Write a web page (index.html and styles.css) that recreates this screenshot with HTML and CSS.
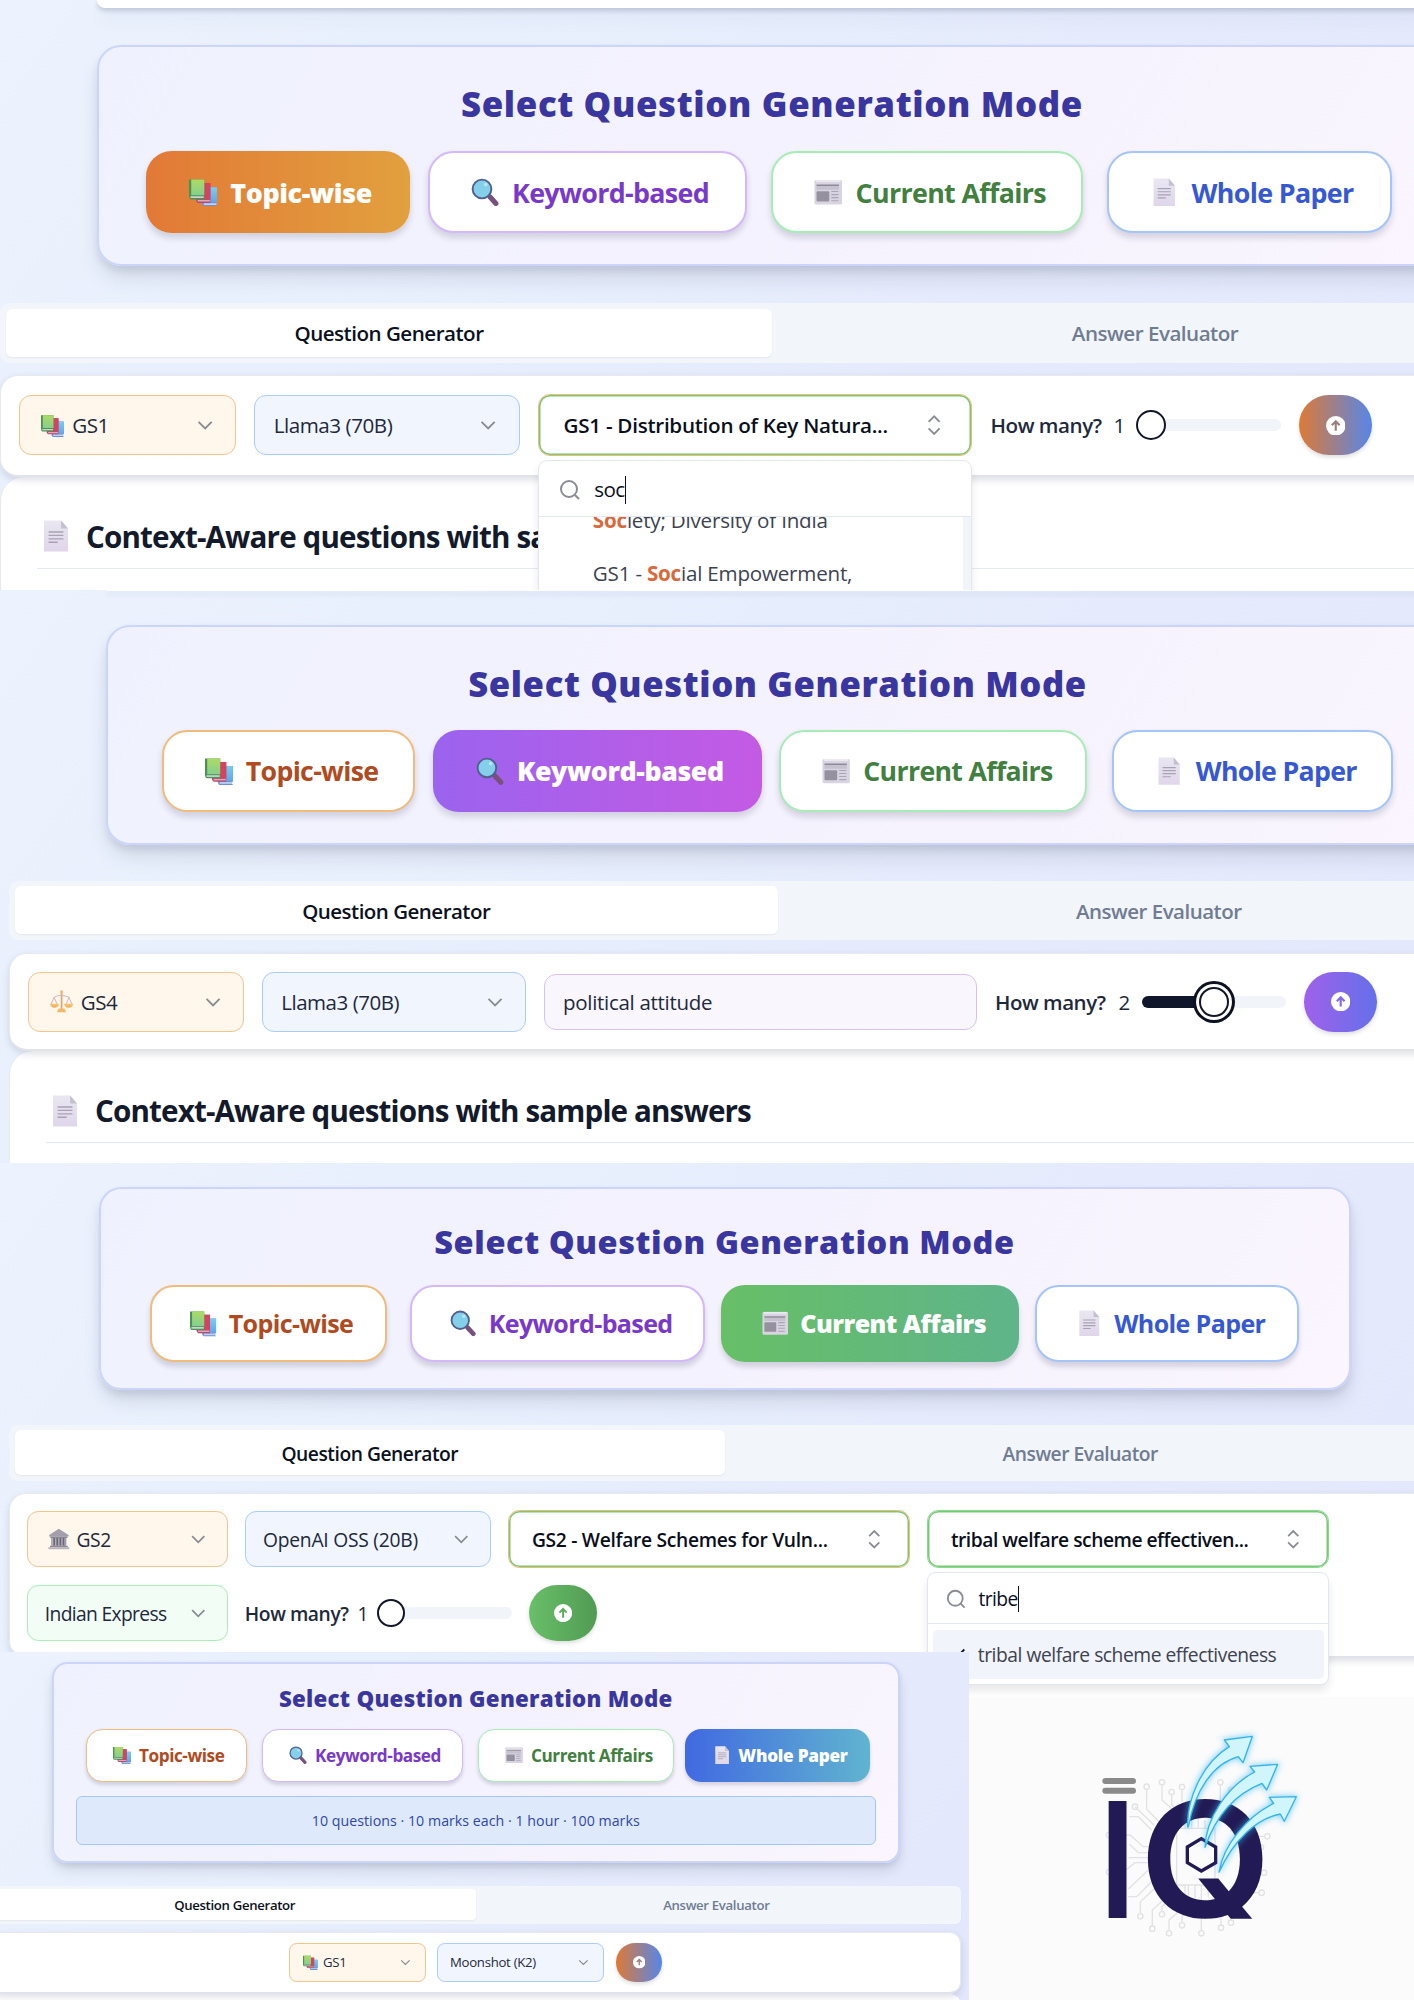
FILE: index.html
```html
<!DOCTYPE html>
<html lang="en">
<head>
<meta charset="utf-8">
<title>Question Generation Modes</title>
<link rel="stylesheet" href="styles.css">
</head>
<body>
<svg class="defs" aria-hidden="true">
  <defs>
    <linearGradient id="gGreen" x1="0" y1="0" x2="0" y2="1"><stop offset="0" stop-color="#acdb64"/><stop offset="1" stop-color="#86cf8e"/></linearGradient>
    <linearGradient id="gBlue" x1="0" y1="0" x2="0" y2="1"><stop offset="0" stop-color="#78cdf0"/><stop offset="1" stop-color="#62a6ea"/></linearGradient>
    <linearGradient id="gDoc" x1="0" y1="0" x2="0" y2="1"><stop offset="0" stop-color="#e9e6f1"/><stop offset="1" stop-color="#e0d6ea"/></linearGradient>
    <linearGradient id="gPan" x1="0" y1="0" x2="0" y2="1"><stop offset="0" stop-color="#f3c877"/><stop offset="1" stop-color="#f5a94e"/></linearGradient>
  </defs>
  <symbol id="books" viewBox="0 0 28 28">
    <path d="M12.500 23.500h1V9h14v15.500h-1v2.500h1v1h-13q-2-1.500-2-4.500z" fill="#6b8fd2"/>
    <path d="M15 9h12.500v15h-12.500z" fill="url(#gBlue)"/><path d="M14.500 24.800h12.500v1.700h-12.500z" fill="#c3d3ee"/>
    <path d="M6.500 20V5h14.500v19.500h-12.500q-2-1.500-2-4.500z" fill="#b54a70"/><path d="M8 5h13v16h-13z" fill="#d5435f"/><path d="M8.500 21.600h12v1.500h-12z" fill="#e0a9ba"/>
    <path d="M0 18V1.500h15v19.500h-13.500q-1.500-1-1.500-3z" fill="#4b9355"/><path d="M2.200 1.500h12.800v15.500h-12.800z" fill="url(#gGreen)"/><path d="M1.500 18h13v1.700h-13z" fill="#c7d4cf"/>
  </symbol>
  <symbol id="mag" viewBox="0 0 28 28">
    <path d="M18.500 18.500l6 6.500" stroke="#76517c" stroke-width="5" stroke-linecap="round"/>
    <circle cx="10.800" cy="10.800" r="9.200" fill="#84cfe9" stroke="#525f8d" stroke-width="1.900"/>
    <circle cx="14.500" cy="6.500" r="1.800" fill="#b9e6f4"/>
  </symbol>
  <symbol id="news" viewBox="0 0 28 28">
    <rect x=".5" y="2" width="27" height="24" rx="1.500" fill="#d9d4e1"/><rect x="2" y="2" width="24" height="2" fill="#ece8f0"/>
    <path d="M2.500 6.500h22v1.600h-22z" fill="#8f8a99"/><path d="M2.500 8.500h22v3h-22z" fill="#c6c0cf"/>
    <rect x="2.500" y="13" width="12.500" height="10" rx="1" fill="#96919f"/>
    <path d="M17 13.300h7M17 16.300h7M17 19.300h7M17 22.300h7" stroke="#aaa4b4" stroke-width="1.100"/>
  </symbol>
  <symbol id="doc" viewBox="0 0 28 28">
    <path d="M3.500 .5h15l6 7v20h-21z" fill="url(#gDoc)"/><path d="M18.500 .5l6 7h-6z" fill="#c6bfd0"/>
    <path d="M7.500 10.500h13M7.500 13.500h13M7.500 16.500h13M7.500 19.500h8" stroke="#a8a2b2" stroke-width="1.200"/>
  </symbol>
  <symbol id="scales" viewBox="0 0 28 28">
    <path d="M14 1v22" stroke="#d9a56b" stroke-width="2"/><circle cx="14" cy="2.500" r="1.800" fill="#f1be6c"/>
    <path d="M4.500 9q5-3 9.500-2.500t9.500 2.500M5 9l-3.500 8M5 9l3.500 8M23 9l-3.500 8M23 9l3.500 8" fill="none" stroke="#cfb6c0" stroke-width="1.200"/>
    <path d="M0 16.500h11q-1 5-5.500 5t-5.500-5zM17 16.500h11q-1 5-5.500 5t-5.500-5z" fill="url(#gPan)"/>
    <path d="M10.500 22.500h7l2 4.500h-11z" fill="#f3b865"/>
  </symbol>
  <symbol id="bank" viewBox="0 0 28 28">
    <path d="M14 1l12.500 8v2h-25v-2z" fill="#a49fac"/><path d="M3 11h22v2h-22z" fill="#8a8593"/>
    <path d="M4.500 13h19v10h-19z" fill="#6c6775"/><path d="M6 13v10M10 13v10M14 13v10M18 13v10M22 13v10" stroke="#b5b0bd" stroke-width="1.800"/>
    <path d="M2.500 23h23v2h-23z" fill="#8f8a99"/><path d="M.5 25h27v2.500h-27z" fill="#b9b3c1"/>
  </symbol>
  <symbol id="down" viewBox="0 0 24 24"><path d="m6 9 6 6 6-6"/></symbol>
  <symbol id="updown" viewBox="0 0 24 24"><path d="m7 15 5 5 5-5M7 9l5-5 5 5"/></symbol>
  <symbol id="search" viewBox="0 0 24 24"><circle cx="11" cy="11" r="8"/><path d="m21 21-4.300-4.300"/></symbol>
  <symbol id="check" viewBox="0 0 24 24"><path d="M20 6 9 17l-5-5"/></symbol>
  <symbol id="up" viewBox="0 0 20 20"><circle cx="10" cy="10" r="10" fill="#fff"/><path d="M10 15V6M6 9.500l4-4 4 4" fill="none" stroke="currentColor" stroke-width="2.200"/></symbol>
</svg>

<main class="board">
  <section class="panel topic">
    <div class="peek"></div>
    <div class="card">
      <h2>Select Question Generation Mode</h2>
      <div class="modes">
        <button class="mode m-topic on"><svg><use href="#books"/></svg><span>Topic-wise</span></button>
        <button class="mode m-key"><svg><use href="#mag"/></svg><span>Keyword-based</span></button>
        <button class="mode m-news"><svg><use href="#news"/></svg><span>Current Affairs</span></button>
        <button class="mode m-paper"><svg><use href="#doc"/></svg><span>Whole Paper</span></button>
      </div>
    </div>
    <div class="tabs"><div class="tab on">Question Generator</div><div class="tab">Answer Evaluator</div></div>
    <div class="toolbar">
      <div class="select paper"><svg class="emoji"><use href="#books"/></svg><span>GS1</span><svg class="chev"><use href="#down"/></svg></div>
      <div class="select model"><span>Llama3 (70B)</span><svg class="chev"><use href="#down"/></svg></div>
      <div class="combo">
        <span>GS1 - Distribution of Key Natura...</span><svg class="chev"><use href="#updown"/></svg>
        <div class="popup">
          <div class="find"><svg><use href="#search"/></svg><span class="typed">soc</span></div>
          <div class="list">
            <p><b>Soc</b>iety; Diversity of India</p>
            <p>GS1 - <b>Soc</b>ial Empowerment,</p>
          </div>
        </div>
      </div>
      <div class="count"><span>How many?</span><span class="num">1</span><div class="slider"><div class="thumb"></div></div></div>
      <button class="go"><svg><use href="#up"/></svg></button>
    </div>
    <div class="result"><h3><svg><use href="#doc"/></svg>Context-Aware questions with sample answers</h3></div>
  </section>

  <section class="panel keyword">
    <div class="peek"></div>
    <div class="card">
      <h2>Select Question Generation Mode</h2>
      <div class="modes">
        <button class="mode m-topic"><svg><use href="#books"/></svg><span>Topic-wise</span></button>
        <button class="mode m-key on"><svg><use href="#mag"/></svg><span>Keyword-based</span></button>
        <button class="mode m-news"><svg><use href="#news"/></svg><span>Current Affairs</span></button>
        <button class="mode m-paper"><svg><use href="#doc"/></svg><span>Whole Paper</span></button>
      </div>
    </div>
    <div class="tabs"><div class="tab on">Question Generator</div><div class="tab">Answer Evaluator</div></div>
    <div class="toolbar">
      <div class="select paper"><svg class="emoji"><use href="#scales"/></svg><span>GS4</span><svg class="chev"><use href="#down"/></svg></div>
      <div class="select model"><span>Llama3 (70B)</span><svg class="chev"><use href="#down"/></svg></div>
      <div class="field">political attitude</div>
      <div class="count"><span>How many?</span><span class="num">2</span><div class="slider half"><div class="thumb focus"></div></div></div>
      <button class="go"><svg><use href="#up"/></svg></button>
    </div>
    <div class="result"><h3><svg><use href="#doc"/></svg>Context-Aware questions with sample answers</h3></div>
  </section>

  <section class="panel affairs">
    <div class="card">
      <h2>Select Question Generation Mode</h2>
      <div class="modes">
        <button class="mode m-topic"><svg><use href="#books"/></svg><span>Topic-wise</span></button>
        <button class="mode m-key"><svg><use href="#mag"/></svg><span>Keyword-based</span></button>
        <button class="mode m-news on"><svg><use href="#news"/></svg><span>Current Affairs</span></button>
        <button class="mode m-paper"><svg><use href="#doc"/></svg><span>Whole Paper</span></button>
      </div>
    </div>
    <div class="tabs"><div class="tab on">Question Generator</div><div class="tab">Answer Evaluator</div></div>
    <div class="toolbar">
      <div class="select paper"><svg class="emoji"><use href="#bank"/></svg><span>GS2</span><svg class="chev"><use href="#down"/></svg></div>
      <div class="select model"><span>OpenAI OSS (20B)</span><svg class="chev"><use href="#down"/></svg></div>
      <div class="combo welfare"><span>GS2 - Welfare Schemes for Vuln...</span><svg class="chev"><use href="#updown"/></svg></div>
      <div class="combo green">
        <span>tribal welfare scheme effectiven...</span><svg class="chev"><use href="#updown"/></svg>
        <div class="popup">
          <div class="find"><svg><use href="#search"/></svg><span class="typed">tribe</span></div>
          <div class="option"><svg><use href="#check"/></svg><span>tribal welfare scheme effectiveness</span></div>
        </div>
      </div>
      <div class="select source"><span>Indian Express</span><svg class="chev"><use href="#down"/></svg></div>
      <div class="count"><span>How many?</span><span class="num">1</span><div class="slider"><div class="thumb"></div></div></div>
      <button class="go"><svg><use href="#up"/></svg></button>
    </div>
    <div class="result"></div>
  </section>

  <section class="panel whole">
    <div class="card">
      <h2>Select Question Generation Mode</h2>
      <div class="modes">
        <button class="mode m-topic"><svg><use href="#books"/></svg><span>Topic-wise</span></button>
        <button class="mode m-key"><svg><use href="#mag"/></svg><span>Keyword-based</span></button>
        <button class="mode m-news"><svg><use href="#news"/></svg><span>Current Affairs</span></button>
        <button class="mode m-paper on"><svg><use href="#doc"/></svg><span>Whole Paper</span></button>
      </div>
      <div class="info">10 questions · 10 marks each · 1 hour · 100 marks</div>
    </div>
    <div class="tabs"><div class="tab on">Question Generator</div><div class="tab">Answer Evaluator</div></div>
    <div class="toolbar">
      <div class="select paper"><svg class="emoji"><use href="#books"/></svg><span>GS1</span><svg class="chev"><use href="#down"/></svg></div>
      <div class="select model"><span>Moonshot (K2)</span><svg class="chev"><use href="#down"/></svg></div>
      <button class="go"><svg><use href="#up"/></svg></button>
    </div>
    <div class="result"></div>
  </section>

  <section class="brand">
    <svg class="logo" viewBox="0 0 720 720">
      <defs>
        <clipPath id="base"><rect x="0" y="0" width="720" height="626"/></clipPath>
        <filter id="glow" x="-30%" y="-30%" width="160%" height="160%"><feGaussianBlur stdDeviation="9"/></filter>
        <path id="arrows" d="M323 351C320 270 365 160 448 110L433 90L517 79L489 158L475 140C400 160 345 240 325 351ZM375 412C378 325 440 230 524 186L510 169L593 163L560 240L546 220C470 250 410 310 375 412ZM417 487C430 405 500 320 581 280L568 262L649 260L613 334L601 312C530 325 460 390 417 487Z"/>
      </defs>
      <g class="circuit">
        <path d="M200 240V298L252 350M246 226V270L292 312M275 255V285L300 310M306 240V275M165 290L222 345M148 320H175L215 360M92 375H150L190 410H205M148 402L175 428H205M145 443H205M92 486H130L165 458H205M145 537L205 480M145 560H170L215 515M181 610V575L235 525M217 647V600L250 570M246 604V590L290 550M267 660V630L290 610V525M306 637V620L325 600V525M364 660V525M423 645V610L400 590M453 630V610L430 590M537 548H505L480 520M545 488H500M535 412H505M555 379H500L470 400M421 225V275M453 240L410 300M540 330H500L450 365"/>
        <path d="M290 355H405V525H290ZM315 355V330M335 355V320M355 355V320M375 355V330M315 525V560M345 525V570M385 525V560"/>
        <circle cx="200" cy="230" r="8"/><circle cx="246" cy="217" r="8"/><circle cx="275" cy="246" r="8"/><circle cx="306" cy="231" r="8"/><circle cx="165" cy="290" r="8"/><circle cx="421" cy="217" r="8"/><circle cx="453" cy="240" r="8"/><circle cx="87" cy="375" r="8"/><circle cx="87" cy="486" r="8"/><circle cx="181" cy="619" r="8"/><circle cx="217" cy="656" r="8"/><circle cx="246" cy="613" r="8"/><circle cx="267" cy="670" r="8"/><circle cx="306" cy="646" r="8"/><circle cx="364" cy="670" r="8"/><circle cx="423" cy="653" r="8"/><circle cx="453" cy="638" r="8"/><circle cx="545" cy="548" r="8"/><circle cx="552" cy="488" r="8"/><circle cx="543" cy="412" r="8"/><circle cx="562" cy="379" r="8"/>
      </g>
      <path d="M76 213H159M76 242H159" stroke="#8a8a8b" stroke-width="18" stroke-linecap="round"/>
      <text class="letter" transform="translate(47 624)">I</text>
      <g clip-path="url(#base)"><text class="letter round" transform="translate(178 621) scale(1.070 1)">Q</text></g>
      <path d="M364 386L407 411V458L364 483L322 458V411Z" fill="none" stroke="#221a55" stroke-width="10"/>
      <use href="#arrows" fill="#35b6f2" stroke="#35b6f2" stroke-width="8" opacity=".6" filter="url(#glow)"/>
      <use href="#arrows" fill="#d0f5fa" stroke="#34b4e8" stroke-width="4" stroke-linejoin="round"/>
    </svg>
  </section>
</main>
</body>
</html>
```
FILE: styles.css
```css
* { box-sizing: border-box; }
body { margin: 0; font-family: "Open Sans", "Noto Sans", sans-serif; color: #1e293b; }
h2, h3, p { margin: 0; }
button { font: inherit; margin: 0; }
svg { display: block; flex: none; }
.defs { position: absolute; width: 0; height: 0; }

.board {
  display: grid;
  width: 1414px;
  height: 2000px;
  grid-template-columns: 969px 445px;
  grid-template-rows: 590px 573px 489px 45px 303px;
  overflow: hidden;
}

.panel {
  display: flex;
  flex-direction: column;
  min-width: 0;
  min-height: 0;
  overflow: hidden;
  background: linear-gradient(125deg, #ecf3fe 0%, #e6edfc 45%, #e3e7fc 100%);
}
.topic {
  grid-area: 1 / 1 / 2 / 3;
  --u: 1.5px; --card-x: 97px; --card-w: 1350px; --card-h: 221px; --card-y: 37px; --card-pad: 37px;
  --bar-x: 0px; --bar-w: 1544px; --tabs-y: 36.500px; --tool-h: 101.500px; --tool-y: 12.500px;
  --w1: 264.500px; --w2: 319.500px; --w3: 312px; --w4: 285px; --gap: 24px; --pull: -6.500px;
}
.keyword {
  grid-area: 2 / 1 / 3 / 3;
  --u: 1.492px; --card-x: 105.500px; --card-w: 1344px; --card-h: 220px; --card-y: 33.500px; --card-pad: 37px;
  --bar-x: 9px; --bar-w: 1537px; --tabs-y: 36px; --tool-h: 98px; --tool-y: 13px;
  --w1: 253.500px; --w2: 329px; --w3: 308px; --w4: 281.500px; --gap: 24.500px; --pull: -7px;
}
.affairs {
  grid-area: 3 / 1 / 5 / 3;
  --u: 1.4px; --card-x: 98.500px; --card-w: 1252px; --card-h: 203.500px; --card-y: 23.500px; --card-pad: 34px;
  --bar-x: 9px; --bar-w: 1432px; --tabs-y: 34.500px; --tool-h: 165px; --tool-y: 12px;
  --w1: 237px; --w2: 295.500px; --w3: 298px; --w4: 264px; --gap: 23px; --pull: -7px;
}
.whole {
  grid-area: 4 / 1 / 6 / 2;
  --u: .96px; --card-x: 51.500px; --card-w: 848.500px; --card-h: 201px; --card-y: 9.500px; --card-pad: 22.500px;
  --bar-x: -10px; --bar-w: 971px; --tabs-y: 23px; --tool-h: 62px; --tool-y: 8px;
  --w1: 160.500px; --w2: 200.500px; --w3: 195.500px; --w4: 185px; --gap: 15.500px; --pull: -4.500px;
  z-index: 1;
}

.peek {
  flex: none;
  height: 8px;
  width: var(--card-w);
  margin-left: var(--card-x);
  background: #fff;
  border-radius: 0 0 20px 20px;
  box-shadow: 0 3px 5px rgba(30, 41, 80, .2), 0 12px 18px rgba(30, 41, 80, .05);
}
.keyword .peek { height: 1px; border-radius: 0; }

.card {
  flex: none;
  width: var(--card-w);
  height: var(--card-h);
  margin: var(--card-y) 0 0 var(--card-x);
  padding-top: var(--card-pad);
  border: 2px solid #cbd5fb;
  border-radius: calc(var(--u) * 16);
  background: linear-gradient(120deg, #eff2fe 0%, #f4f2fe 50%, #faf5fe 100%);
  box-shadow: 0 calc(var(--u) * 9) calc(var(--u) * 14) calc(var(--u) * -3) rgba(30, 35, 60, .15), 0 calc(var(--u) * 3) calc(var(--u) * 5) rgba(30, 35, 60, .08);
}
.card h2 {
  text-align: center;
  font-size: calc(var(--u) * 23.200);
  line-height: calc(var(--u) * 27);
  font-weight: 800;
  letter-spacing: .0184em;
  color: #3a36a0;
}
.whole h2 { letter-spacing: .012em; }
.modes { display: flex; justify-content: center; gap: var(--gap); margin-top: calc(var(--u) * 17.500); }
.mode {
  flex: none;
  display: flex;
  align-items: center;
  gap: calc(var(--u) * 8.500);
  height: calc(var(--u) * 55);
  padding: 0 0 0 calc(var(--u) * 27.500);
  border: 2px solid;
  border-radius: calc(var(--u) * 17);
  background: #fff;
  box-shadow: 0 calc(var(--u) * 3) calc(var(--u) * 4) rgba(40, 40, 60, .16);
  font-size: calc(var(--u) * 17.900);
  font-weight: 700;
  letter-spacing: -.025em;
  white-space: nowrap;
}
.whole .mode { border-width: 1.500px; padding-left: 26px; gap: 7.500px; }
.mode svg { width: calc(var(--u) * 19); height: calc(var(--u) * 19); }
.m-topic { width: var(--w1); border-color: #f1bb7b; color: #b04a20; }
.m-key { width: var(--w2); border-color: #d4b8fa; color: #7839cb; }
.m-news { width: var(--w3); border-color: #a5edb5; color: #41803f; }
.m-paper { width: var(--w4); border-color: #a3c5fa; color: #3658d2; }
.mode.on {
  margin: 0 var(--pull);
  border: 0;
  padding-left: calc(var(--u) * 29);
  font-weight: 800;
  letter-spacing: -.015em;
  color: #fff;
}
.m-topic.on { background: linear-gradient(90deg, #e27936, #e2a03e); }
.m-key.on { background: linear-gradient(90deg, #9b63ee, #c45ae4); }
.m-news.on { background: linear-gradient(90deg, #67bf66, #5fb48a); letter-spacing: -.022em; }
.m-paper.on { background: linear-gradient(90deg, #4169e1, #60b4d0); }

.info {
  display: flex;
  align-items: center;
  justify-content: center;
  height: 48.500px;
  margin: 14.500px 22px 0;
  border: 1.500px solid #a3c8f8;
  border-radius: 6px;
  background: #deeafc;
  color: #2f47a6;
  font-size: 14.200px;
  font-weight: 500;
  letter-spacing: .002em;
}

.tabs {
  flex: none;
  display: grid;
  grid-template-columns: 1fr 1fr;
  width: var(--bar-w);
  height: calc(var(--u) * 40);
  margin: var(--tabs-y) 0 0 var(--bar-x);
  padding: calc(var(--u) * 4);
  border-radius: calc(var(--u) * 6);
  background: #f2f5fa;
}
.tab {
  display: flex;
  align-items: center;
  justify-content: center;
  padding-top: 1px;
  border-radius: calc(var(--u) * 4);
  font-size: calc(var(--u) * 13.750);
  font-weight: 600;
  letter-spacing: -.025em;
  color: #6f7c92;
}
.tab.on { background: #fff; color: #0b1120; box-shadow: 0 1px 2px rgba(0, 0, 0, .06); }

.toolbar {
  position: relative;
  z-index: 1;
  flex: none;
  display: flex;
  flex-wrap: wrap;
  align-items: center;
  align-content: center;
  gap: calc(var(--u) * 12.800) calc(var(--u) * 12.100);
  width: var(--bar-w);
  height: var(--tool-h);
  margin: var(--tool-y) 0 0 var(--bar-x);
  padding: 0 calc(var(--u) * 12);
  border: 1px solid #e7e9ef;
  border-bottom: 2px solid #e2e3ea;
  border-radius: calc(var(--u) * 12);
  background: #fff;
  box-shadow: 0 3px 7px rgba(40, 50, 90, .15);
  font-size: calc(var(--u) * 13.750);
}
.affairs .toolbar { gap: 18px 17px; padding-top: 3px; }
.whole .toolbar { justify-content: center; }
.select, .combo, .field {
  flex: none;
  display: flex;
  align-items: center;
  height: calc(var(--u) * 40);
  border: 1px solid;
  border-radius: calc(var(--u) * 8);
  white-space: nowrap;
  letter-spacing: -.022em;
}
.select { padding: 0 calc(var(--u) * 11.500) 0 calc(var(--u) * 12.300); }
.select .emoji { width: calc(var(--u) * 15.500); height: calc(var(--u) * 15.500); margin: 0 calc(var(--u) * 5) 0 calc(var(--u) * 2); }
.paper { width: calc(var(--u) * 144.700); border-color: #f3c48c; background: #fff6ec; }
.affairs .paper, .affairs .source { width: 201px; }
.whole .paper { width: 137px; }
.model { width: calc(var(--u) * 177); border-color: #a9ccfb; background: #f0f5fe; }
.whole .model { width: 167px; }
.affairs .model { width: 246px; letter-spacing: -.013em; }
.source { border-color: #a8eeb8; background: #f2fdf5; letter-spacing: -.034em; }
.affairs .source { padding-left: 17px; }
.chev { width: calc(var(--u) * 17.500); height: calc(var(--u) * 17.500); margin-left: auto; fill: none; stroke: #898c93; stroke-width: 1.700; }
.combo {
  position: relative;
  width: calc(var(--u) * 289.700);
  height: calc(var(--u) * 41.500);
  margin: calc(var(--u) * -.750) 0;
  padding: 0 calc(var(--u) * 16) 0 calc(var(--u) * 16.500);
  border-color: #efba7a;
  box-shadow: inset 0 0 0 1.500px #79c873;
  color: #0a0f1c;
  font-weight: 600;
  letter-spacing: -.0133em;
}
.affairs .combo { width: 402px; letter-spacing: -.025em; }
.affairs .welfare { letter-spacing: -.016em; }
.combo.green { border-color: #86da8e; }
.field { width: 433px; height: 56px; padding-left: 18px; border-color: #d8bff8; background: #f9f6fe; letter-spacing: -.0142em; }

.count { flex: none; display: flex; align-items: center; font-weight: 600; letter-spacing: -.0229em; white-space: nowrap; }
.num { margin: 0 calc(var(--u) * 7.500) 0 calc(var(--u) * 8); font-weight: 500; }
.keyword .num { margin: 0 12.500px 0 13px; }
.affairs .num { margin: 0 9px; }
.slider { position: relative; width: calc(var(--u) * 96.500); height: calc(var(--u) * 8); border-radius: 9px; background: #f1f5fa; }
.slider.half { background: linear-gradient(90deg, #10172a 50%, #f1f5fa 50%); }
.thumb {
  position: absolute;
  left: 0;
  top: calc(var(--u) * -6);
  width: calc(var(--u) * 20);
  height: calc(var(--u) * 20);
  border: calc(var(--u) * 1.600) solid #111629;
  border-radius: 50%;
  background: #fff;
}
.half .thumb { left: calc(50% - var(--u) * 10); }
.thumb.focus { box-shadow: 0 0 0 3px #fff, 0 0 0 6px #0b1120; }

.go {
  flex: none;
  display: flex;
  align-items: center;
  justify-content: center;
  width: calc(var(--u) * 48.500);
  height: calc(var(--u) * 40);
  padding: 0;
  border: 0;
  border-radius: calc(var(--u) * 20);
  background: linear-gradient(90deg, #dd7a36, #5686ea);
  color: #9b7f7e;
  box-shadow: 0 2px 4px rgba(0, 0, 0, .14);
}
.go svg { width: calc(var(--u) * 13); height: calc(var(--u) * 13); }
.keyword .go { background: linear-gradient(90deg, #a061ea, #6470ea); color: #8468ea; }
.affairs .go { background: linear-gradient(90deg, #69bf69, #519b53); color: #5cad5d; }

.popup {
  position: absolute;
  left: -1px;
  right: -1px;
  top: calc(100% + var(--u) * 3.300);
  z-index: 2;
  border: 1px solid #e2e7ef;
  border-radius: calc(var(--u) * 6);
  background: #fff;
  box-shadow: 0 6px 9px rgba(0, 0, 0, .09);
  font-weight: 400;
  letter-spacing: -.0106em;
  overflow: hidden;
}
.find { display: flex; align-items: center; gap: calc(var(--u) * 8); height: 56px; padding: 2px 0 0 calc(var(--u) * 13); border-bottom: 1px solid #e2e8f0; }
.find svg { width: calc(var(--u) * 16); height: calc(var(--u) * 16); fill: none; stroke: #8a8d94; stroke-width: 2; }
.typed { padding: 0 0 1px; line-height: calc(var(--u) * 18); border-right: 1.500px solid #111; letter-spacing: -.03em; }
.list { height: 90px; border-right: 8px solid #f1f5fa; color: #3d4350; line-height: 30px; padding-left: 54px; overflow: hidden; }
.list p { margin-bottom: 23px; }
.list p:first-child { margin-top: -12px; }
.list b { font-weight: 700; color: #d9683a; }
.affairs .popup { height: 113px; top: calc(100% + 5px); }
.affairs .find { height: 51px; padding-left: 17px; }
.option { display: flex; align-items: center; gap: 10px; height: 49px; margin: 6px 4px 0 5px; padding-left: 13px; border-radius: 5px; background: #f1f4fa; color: #3d4350; letter-spacing: -.0243em; }
.option svg { width: 22px; height: 22px; fill: none; stroke: #111827; stroke-width: 2; }

.result {
  flex: 1 0 auto;
  width: var(--bar-w);
  min-height: 40px;
  margin-left: var(--bar-x);
  border-radius: calc(var(--u) * 16) 0 0 0;
  padding: 0 36px;
  border-left: 1px solid #e7e9ef;
  background: #fff;
}
.whole .result { border-radius: 0 calc(var(--u) * 12) 0 0; }
.result h3 {
  display: flex;
  align-items: center;
  gap: 14px;
  height: 92px;
  padding: 28px 0 0 3px;
  border-bottom: 1px solid #e5eaf2;
  color: #131a2b;
  font-size: 29.600px;
  font-weight: 700;
  letter-spacing: -.0291em;
  white-space: nowrap;
}
.result h3 svg { width: 32px; height: 32px; }

.brand { grid-area: 5 / 2 / 6 / 3; background: #fbfbfb; padding: 13px 0 0 111px; }
.logo { width: 240px; height: 240px; }
.letter { font: 500 481px "Inter", sans-serif; fill: #221a55; }
.letter.round { font-weight: 560; }
.circuit { fill: none; stroke: #e2e2e4; stroke-width: 4; }
```
